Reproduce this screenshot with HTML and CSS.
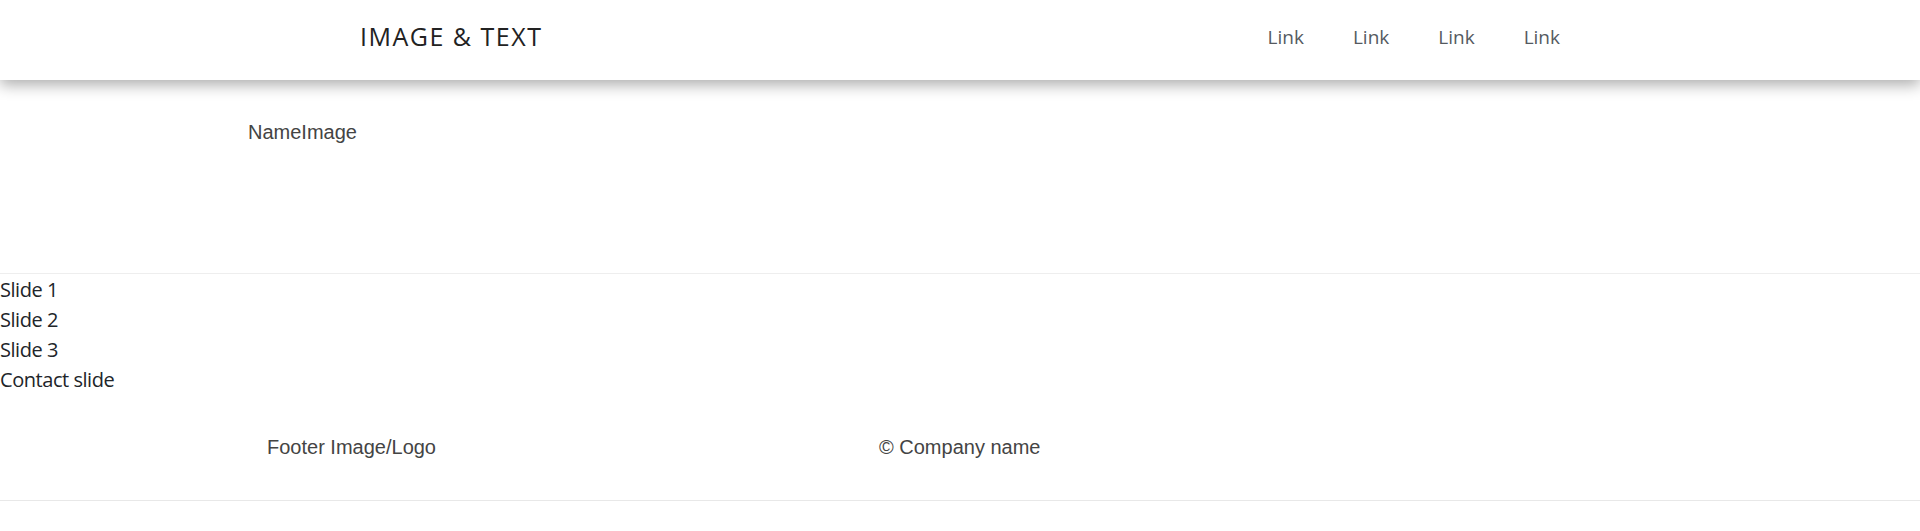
FILE: index.html
```html
<!DOCTYPE html>
<html lang="en">
<head>
<meta charset="utf-8">
<title>Image &amp; Text</title>
<link rel="stylesheet" href="styles.css">
</head>
<body>
<header class="site-header">
  <div class="header-inner">
    <span class="brand">IMAGE &amp; TEXT</span>
    <nav class="nav">
      <a class="nav-link" href="#">Link</a>
      <a class="nav-link" href="#">Link</a>
      <a class="nav-link" href="#">Link</a>
      <a class="nav-link" href="#">Link</a>
    </nav>
  </div>
</header>
<section class="hero">
  <div class="hero-inner"><span>Name</span><span>Image</span></div>
</section>
<ul class="slides">
  <li>Slide 1</li>
  <li>Slide 2</li>
  <li>Slide 3</li>
  <li>Contact slide</li>
</ul>
<footer class="site-footer">
  <div class="footer-inner">
    <span class="footer-logo">Footer Image/Logo</span>
    <span class="footer-copy">© Company name</span>
  </div>
</footer>
</body>
</html>
```
FILE: styles.css
```css
html, body {
  margin: 0;
  padding: 0;
  background: #ffffff;
}
body {
  font-family: "Open Sans", "Noto Sans", sans-serif;
  color: #212529;
}
.site-header {
  position: relative;
  z-index: 1;
  height: 80px;
  background: #ffffff;
  box-shadow: 0 5px 14px rgba(0, 0, 0, 0.32);
}
.header-inner {
  box-sizing: border-box;
  width: 1200px;
  height: 80px;
  padding-bottom: 8px;
  margin: 0 auto;
  display: flex;
  align-items: center;
  justify-content: space-between;
}
.brand {
  font-size: 25px;
  letter-spacing: 1.5px;
  color: #222222;
  font-weight: 400;
  line-height: 1;
}
.nav {
  display: flex;
  gap: 49px;
  padding-top: 2px;
}
.nav-link {
  font-size: 19px;
  color: #555a5f;
  text-decoration: none;
}
.hero {
  box-sizing: border-box;
  height: 194px;
  border-bottom: 1px solid #eeeeee;
}
.hero-inner {
  padding: 41px 0 0 248px;
  font-family: "Liberation Sans", Arial, sans-serif;
  font-size: 20px;
  color: #444444;
}
.slides {
  list-style: none;
  margin: 0;
  padding: 1px 0 0;
  font-size: 20px;
  line-height: 30px;
  letter-spacing: -0.45px;
  color: #212529;
}
.site-footer {
  padding: 41px 0 41px;
  border-bottom: 1px solid #e8e8e8;
}
.footer-inner {
  display: grid;
  grid-template-columns: 612px auto;
  padding-left: 267px;
  font-family: "Liberation Sans", Arial, sans-serif;
  font-size: 20px;
  line-height: 23px;
  color: #444444;
}
```
